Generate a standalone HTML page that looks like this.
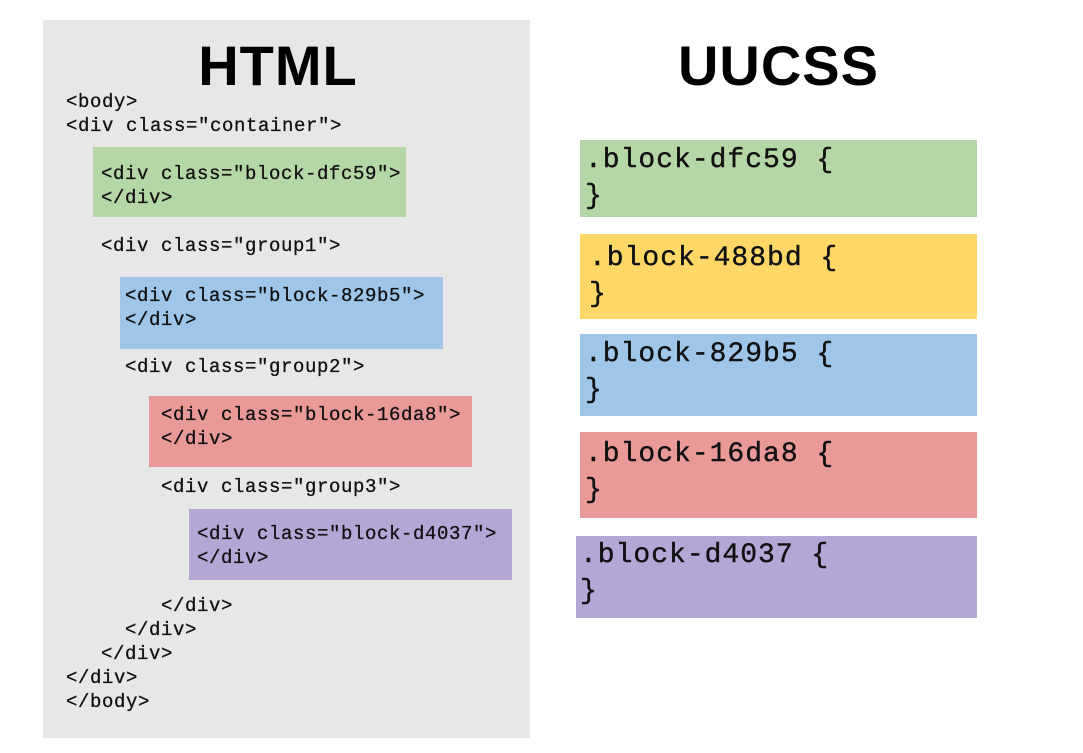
<!DOCTYPE html>
<html><head><meta charset="utf-8"><style>
body{margin:0;width:1083px;height:753px;background:#fff;position:relative;overflow:hidden;font-family:"Liberation Mono",monospace}
.p{position:absolute;left:43px;top:20px;width:487px;height:718px;background:#e7e7e7}
.t{position:absolute;font-family:"Liberation Sans",sans-serif;font-weight:bold;font-size:56px;line-height:56px;color:#000;text-align:center;letter-spacing:1px}
.b{position:absolute}
.l{position:absolute;font-size:19px;line-height:24px;letter-spacing:0.6px;color:#111;white-space:pre;-webkit-text-stroke:0.3px #111}
.r{position:absolute;font-size:28px;line-height:36px;letter-spacing:1px;color:#111;white-space:pre;-webkit-text-stroke:0.4px #111}
.g{background:#b5d7a8}.y{background:#fed766}.bl{background:#9fc5e8}.rd{background:#ea9999}.pu{background:#b4a7d6}
</style></head><body>
<div class="p"></div>
<div class="t" style="left:43px;width:470px;top:38px">HTML</div>
<div class="t" style="left:580px;width:397px;top:38px">UUCSS</div>

<div class="b g" style="left:93px;top:147px;width:313px;height:70px"></div>
<div class="b bl" style="left:120px;top:277px;width:323px;height:72px"></div>
<div class="b rd" style="left:149px;top:396px;width:323px;height:71px"></div>
<div class="b pu" style="left:189px;top:509px;width:323px;height:71px"></div>

<div class="l" style="left:66px;top:90px">&lt;body&gt;</div>
<div class="l" style="left:66px;top:114px">&lt;div class="container"&gt;</div>
<div class="l" style="left:101px;top:162px">&lt;div class="block-dfc59"&gt;
&lt;/div&gt;</div>
<div class="l" style="left:101px;top:234px">&lt;div class="group1"&gt;</div>
<div class="l" style="left:125px;top:284px">&lt;div class="block-829b5"&gt;
&lt;/div&gt;</div>
<div class="l" style="left:125px;top:355px">&lt;div class="group2"&gt;</div>
<div class="l" style="left:161px;top:403px">&lt;div class="block-16da8"&gt;
&lt;/div&gt;</div>
<div class="l" style="left:161px;top:475px">&lt;div class="group3"&gt;</div>
<div class="l" style="left:197px;top:522px">&lt;div class="block-d4037"&gt;
&lt;/div&gt;</div>
<div class="l" style="left:161px;top:594px">&lt;/div&gt;</div>
<div class="l" style="left:125px;top:618px">&lt;/div&gt;</div>
<div class="l" style="left:101px;top:642px">&lt;/div&gt;</div>
<div class="l" style="left:66px;top:666px">&lt;/div&gt;</div>
<div class="l" style="left:66px;top:690px">&lt;/body&gt;</div>

<div class="b g" style="left:580px;top:140px;width:397px;height:77px"></div>
<div class="b y" style="left:580px;top:234px;width:397px;height:85px"></div>
<div class="b bl" style="left:580px;top:334px;width:397px;height:82px"></div>
<div class="b rd" style="left:580px;top:432px;width:397px;height:86px"></div>
<div class="b pu" style="left:576px;top:536px;width:401px;height:82px"></div>

<div class="r" style="left:585px;top:143px">.block-dfc59 {
}</div>
<div class="r" style="left:589px;top:241px">.block-488bd {
}</div>
<div class="r" style="left:585px;top:337px">.block-829b5 {
}</div>
<div class="r" style="left:585px;top:437px">.block-16da8 {
}</div>
<div class="r" style="left:580px;top:538px">.block-d4037 {
}</div>
</body></html>
